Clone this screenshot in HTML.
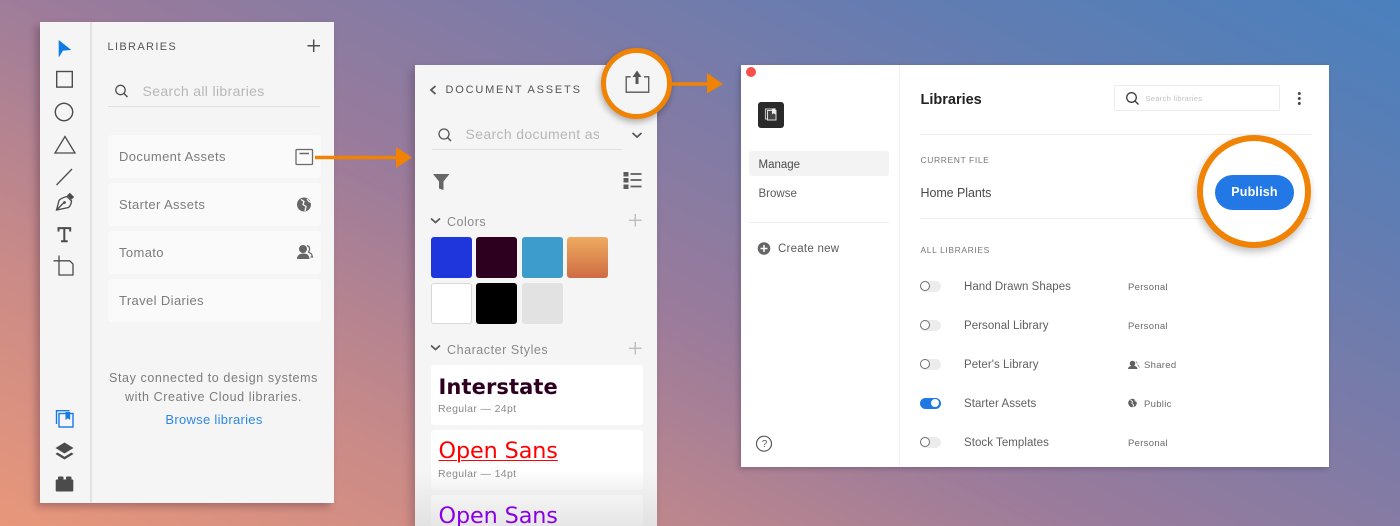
<!DOCTYPE html>
<html><head><meta charset="utf-8"><style>
html,body{margin:0;padding:0;width:1400px;height:526px;overflow:hidden;background:#9a7b9b}
body{position:relative;font-family:"Liberation Sans",sans-serif}
#bg{position:absolute;left:0;top:0;width:1400px;height:526px;background:linear-gradient(27deg,#e8977a 0%,#c98a88 22%,#9a7b9b 45%,#7a7ba8 65%,#5f7db3 82%,#4a80bd 100%)}
.a{position:absolute;white-space:nowrap}
.p{position:absolute;background:#f5f5f5}
.row{position:absolute;left:108px;width:213px;height:43px;background:#fafafa;border-radius:4px}
.row span{position:absolute;left:11px;top:14px;font-size:13px;letter-spacing:.38px;color:#7c7c7c;line-height:16px}
.sw{position:absolute;width:41px;height:41px;border-radius:3px;box-sizing:border-box}
.card{position:absolute;left:431px;width:212px;height:60px;background:#fff;border-radius:3px}
.tog{position:absolute;left:920px;width:21px;height:11px;border-radius:6px;background:#ececec}
.tog i{position:absolute;left:0;top:0;width:8.400px;height:8.400px;border:1.300px solid #6e6e6e;border-radius:50%;background:#fff}
.ln{position:absolute;left:964px;font-size:11.500px;letter-spacing:.05px;color:#5f5f5f;line-height:14px}
.ty{position:absolute;left:1128px;font-size:9.500px;letter-spacing:.3px;color:#6a6a6a;line-height:12px}
svg{position:absolute;overflow:visible}
</style></head><body>
<div id="bg"></div>

<!-- Left panel -->
<div class="p" style="left:40px;top:22px;width:294px;height:481px;box-shadow:-4px 4px 7px rgba(60,30,50,.3)"></div>
<div class="a" style="left:90px;top:22px;width:2px;height:481px;background:#e3e3e3"></div>
<svg style="left:0;top:0" width="340" height="510" fill="none" stroke="#4b4b4b" stroke-width="1.400">
<path d="M58.700 40L71.300 50 63 50.600 58.700 57.500z" fill="#0f7ce6" stroke="none"/>
<rect x="56.700" y="71.500" width="15.600" height="15.600"/>
<circle cx="64" cy="112" r="8.700"/>
<path d="M65 136.500L55 153h20z" stroke-width="1.300"/>
<path d="M56.500 185L72 169" stroke-width="1.300"/>
<path d="M56.500 210L59 200.500Q61 198 67 196.500L71.500 201Q71 205.500 68.500 207.500zM56.500 210L63.500 203" stroke-width="1.300"/>
<path d="M67 195.500l2.800-2.800 4.300 4.300-2.800 2.800z" fill="#4b4b4b" stroke="none"/>
<circle cx="64.500" cy="202.500" r="1.400" fill="#4b4b4b" stroke="none"/>
<path d="M58.500 231.500v-3.400h11.700v3.400M64.300 228v13M61 241.200h6.700" stroke-width="2"/>
<path d="M53.500 260.800H59M59 255.500V275h14V264l-3.300-3.200H59" stroke-width="1.300"/>
<path d="M56.500 424V410.700H69.500" stroke="#1679e8" stroke-width="1.400"/>
<rect x="59" y="413.500" width="14" height="13.500" stroke="#1679e8" stroke-width="1.400"/>
<path d="M65.500 412h4.700v8l-2.300-1.800L65.500 420z" fill="#1679e8" stroke="none"/>
<path d="M64.500 442.500l9 5.500-9 5.500-9-5.500z" fill="#4b4b4b" stroke="none"/>
<path d="M57.500 452.500l7 4.200 7-4.200 2 1.500-9 5.500-9-5.500z" fill="#4b4b4b" stroke="none"/>
<rect x="55.700" y="479.500" width="17.600" height="12" rx="1" fill="#4b4b4b" stroke="none"/>
<rect x="58" y="476.500" width="5.500" height="6" rx="1" fill="#4b4b4b" stroke="none"/>
<rect x="66" y="476.500" width="5.500" height="6" rx="1" fill="#4b4b4b" stroke="none"/>
<path d="M307.500 45.800h12.500M313.700 39.500v12.500" stroke="#4f4f4f" stroke-width="1.500"/>
<circle cx="120.500" cy="90" r="4.700" stroke="#4f4f4f" stroke-width="1.300"/><path d="M124 93.500l3.500 3.500" stroke="#4f4f4f" stroke-width="1.500"/>
</svg>
<div class="a" style="left:107.500px;top:40px;font-size:11px;letter-spacing:1.350px;color:#555;line-height:14px">LIBRARIES</div>
<div class="a" style="left:142.500px;top:83px;font-size:14px;letter-spacing:.35px;color:#b7b7b7;line-height:17px">Search all libraries</div>
<div class="a" style="left:108px;top:106px;width:212px;height:1px;background:#e0e0e0"></div>
<div class="row" style="top:135px"><span>Document Assets</span></div>
<div class="row" style="top:183px"><span>Starter Assets</span></div>
<div class="row" style="top:231px"><span>Tomato</span></div>
<div class="row" style="top:279px"><span>Travel Diaries</span></div>
<svg style="left:0;top:0" width="340" height="300" fill="none">
<rect x="296" y="149.500" width="16.500" height="15" rx="1" stroke="#6a6a6a" stroke-width="1.300"/><path d="M299.500 153.500h9.500" stroke="#6a6a6a" stroke-width="1.500"/>
<circle cx="304" cy="204.500" r="7" fill="#666"/><path d="M301 199.500l3 2-1 3 3 2-1 4.500M307 199l2 2.500 2.500 1" stroke="#fafafa" stroke-width="1.300"/>
<circle cx="303" cy="249" r="4" fill="#666"/><path d="M297 259q0-5 6-5.500t6.500 5.500z" fill="#666"/><path d="M307 245.500q3 1 2.500 4.500l-1 2 3 2 1 3h-2" stroke="#666" stroke-width="1.200"/>
</svg>
<div class="a" style="left:40px;width:347px;text-align:center;top:369px;font-size:12.500px;letter-spacing:.6px;color:#7c7c7c;line-height:19px">Stay connected to design systems<br>with Creative Cloud libraries.</div>
<div class="a" style="left:40px;width:348px;text-align:center;top:412px;font-size:13px;letter-spacing:.3px;color:#2f87e4;line-height:16px">Browse libraries</div>

<!-- Middle panel -->
<div class="p" style="left:415px;top:65px;width:242px;height:461px;background:linear-gradient(#f5f5f5 88%,#e2e2e2 100%);box-shadow:-4px 4px 8px rgba(60,30,50,.25)"></div>
<div class="a" style="left:445.500px;top:83px;font-size:11px;letter-spacing:1.800px;color:#555;line-height:14px">DOCUMENT ASSETS</div>
<div class="a" style="left:465.500px;top:126px;width:133px;overflow:hidden;font-size:14px;letter-spacing:.35px;color:#b7b7b7;line-height:17px">Search document assets</div>
<div class="a" style="left:432px;top:148.500px;width:190px;height:1px;background:#e2e2e2"></div>
<div class="a" style="left:447px;top:215px;font-size:12.500px;letter-spacing:.5px;color:#8a8a8a;line-height:15px">Colors</div>
<div class="a" style="left:447px;top:343px;font-size:12.500px;letter-spacing:.55px;color:#8a8a8a;line-height:15px">Character Styles</div>
<svg style="left:0;top:0" width="700" height="360" fill="none">
<path d="M435.500 86l-4.500 4 4.500 4" stroke="#555" stroke-width="1.800"/>
<circle cx="444" cy="134" r="5" stroke="#555" stroke-width="1.300"/><path d="M447.500 137.500l3.500 3.500" stroke="#555" stroke-width="1.500"/>
<path d="M632.500 133l4.500 4 4.500-4" stroke="#4f4f4f" stroke-width="1.600"/>
<path d="M433 174h16.500l-6 7.500v8.500l-4.500-1.500v-7z" fill="#666"/>
<rect x="623.500" y="172" width="5" height="4.500" fill="#5b5b5b"/><rect x="623.500" y="178" width="5" height="4.500" fill="#5b5b5b"/><rect x="623.500" y="184.500" width="5" height="4.500" fill="#5b5b5b"/>
<path d="M630.500 174h11M630.500 180h11M630.500 186.500h11" stroke="#5b5b5b" stroke-width="1.700"/>
<path d="M431 218.500l4.500 4 4.500-4M431 345.500l4.500 4 4.500-4" stroke="#555" stroke-width="1.600"/>
<path d="M635.300 214v12.500M629 220.300h12.500M635.300 342v12.500M629 348.300h12.500" stroke="#bdbdbd" stroke-width="1.400"/>
</svg>
<div class="sw" style="left:430.500px;top:237px;background:#1f36dd"></div>
<div class="sw" style="left:476px;top:237px;background:#2e001f"></div>
<div class="sw" style="left:521.500px;top:237px;background:#3d9ccb"></div>
<div class="sw" style="left:566.500px;top:237px;background:linear-gradient(#eeab60,#cf6c44)"></div>
<div class="sw" style="left:430.500px;top:283px;background:#fff;border:1px solid #d8d8d8"></div>
<div class="sw" style="left:476px;top:283px;background:#000"></div>
<div class="sw" style="left:521.500px;top:283px;background:#e2e2e2"></div>

<div class="card" style="top:365px"></div>
<div class="card" style="top:430px;background:linear-gradient(#fff 65%,#f2f2f2)"></div>
<div class="card" style="top:495px;height:31px;background:linear-gradient(#f4f4f4,#e6e6e6)"></div>
<div class="a" style="left:438.500px;top:373px;font-family:'DejaVu Sans',sans-serif;font-weight:700;font-size:21px;letter-spacing:.1px;color:#2e001f;line-height:28px">Interstate</div>
<div class="a" style="left:438px;top:403px;font-size:10.500px;letter-spacing:.35px;color:#8a8a8a;line-height:13px">Regular — 24pt</div>
<div class="a" style="left:438.500px;top:437px;font-family:'DejaVu Sans',sans-serif;font-size:22.300px;letter-spacing:-.1px;color:#f00;line-height:28px;text-decoration:underline;text-decoration-thickness:1px;text-underline-offset:2px">Open Sans</div>
<div class="a" style="left:438px;top:468px;font-size:10.500px;letter-spacing:.35px;color:#8a8a8a;line-height:13px">Regular — 14pt</div>
<div class="a" style="left:438.500px;top:502px;font-family:'DejaVu Sans',sans-serif;font-size:22.300px;letter-spacing:-.1px;color:#8a00e6;line-height:28px">Open Sans</div>

<!-- Right window -->
<div class="a" style="left:741px;top:65px;width:588px;height:402px;background:#fff;box-shadow:-2px 2px 5px rgba(40,30,60,.25)"></div>
<div class="a" style="left:899px;top:65px;width:1px;height:402px;background:#f1f1f1"></div>
<div class="a" style="left:745.500px;top:67px;width:10px;height:10px;border-radius:50%;background:#f9504a"></div>
<div class="a" style="left:758px;top:102px;width:26px;height:26px;border-radius:3px;background:#2a2a2a"></div>
<svg style="left:758px;top:102px" width="26" height="26" fill="none"><rect x="7.500" y="7" width="9.500" height="10" stroke="#bbb" stroke-width="1.200"/><rect x="9.500" y="8.500" width="8.500" height="9.500" fill="#444" stroke="#ddd" stroke-width="1"/><path d="M14 6.500h3.500v6l-1.700-1.300L14 12.500z" fill="#eee"/></svg>
<div class="a" style="left:749px;top:151px;width:140px;height:25px;background:#f3f3f3;border-radius:3px"></div>
<div class="a" style="left:758.500px;top:158px;font-size:11.500px;letter-spacing:0;color:#4a4a4a;line-height:14px">Manage</div>
<div class="a" style="left:758.500px;top:187px;font-size:11.500px;letter-spacing:0;color:#5a5a5a;line-height:14px">Browse</div>
<div class="a" style="left:749px;top:221.500px;width:140px;height:1px;background:#efefef"></div>
<div class="a" style="left:778px;top:242px;font-size:11.500px;letter-spacing:.25px;color:#5a5a5a;line-height:14px">Create new</div>
<svg style="left:0;top:0" width="1400" height="526" fill="none">
<circle cx="764" cy="248.500" r="6.300" fill="#666"/><path d="M760.500 248.500h7M764 245v7" stroke="#fff" stroke-width="1.500"/>
<circle cx="764" cy="443.700" r="7.500" stroke="#5a5a5a" stroke-width="1.200"/>
<circle cx="1131.500" cy="97.500" r="4.800" stroke="#3f3f3f" stroke-width="1.300"/><path d="M1135 101l3.500 3.500" stroke="#3f3f3f" stroke-width="1.400"/>
<circle cx="1299.300" cy="93.500" r="1.500" fill="#4a4a4a"/><circle cx="1299.300" cy="98.500" r="1.500" fill="#4a4a4a"/><circle cx="1299.300" cy="103.500" r="1.500" fill="#4a4a4a"/>
<g fill="#606060">
<circle cx="1132.500" cy="363.500" r="2.800"/><path d="M1128 369q0-3 4.500-3.300t5 3.300z"/><path d="M1135.500 361q2 .8 1.800 3l1.700 1.800.8 3z"/>
<circle cx="1132.500" cy="403" r="4.300"/>
</g>
<path d="M1130.500 400l2 1.500-.7 2 1.800 1.300-.6 2.200M1134.500 399.500l1 1.500 1.700.7" stroke="#fff" stroke-width=".8"/>
</svg>
<div class="a" style="left:920.500px;top:91px;font-size:14.500px;font-weight:700;color:#222;line-height:18px">Libraries</div>
<div class="a" style="left:1114px;top:85px;width:164px;height:24px;border:1px solid #ececec;border-radius:2px"></div>
<div class="a" style="left:1145.500px;top:93px;font-size:7.500px;letter-spacing:.3px;color:#c2c2c2;line-height:11px">Search libraries</div>
<div class="a" style="left:920px;top:134px;width:392px;height:1px;background:#eee"></div>
<div class="a" style="left:920.500px;top:154.500px;font-size:8.500px;letter-spacing:.6px;color:#777;line-height:11px">CURRENT FILE</div>
<div class="a" style="left:920.500px;top:185px;font-size:12.500px;letter-spacing:-.07px;color:#4a4a4a;line-height:16px">Home Plants</div>
<div class="a" style="left:920px;top:217.500px;width:392px;height:1px;background:#eee"></div>
<div class="a" style="left:920.500px;top:244.500px;font-size:8.500px;letter-spacing:.6px;color:#777;line-height:11px">ALL LIBRARIES</div>

<div class="tog" style="top:281px"><i></i></div><div class="ln" style="top:280px">Hand Drawn Shapes</div><div class="ty" style="top:281.500px">Personal</div>
<div class="tog" style="top:320px"><i></i></div><div class="ln" style="top:319px">Personal Library</div><div class="ty" style="top:320.500px">Personal</div>
<div class="tog" style="top:359px"><i></i></div><div class="ln" style="top:358px">Peter's Library</div><div class="ty" style="left:1144px;top:359.500px">Shared</div>
<div class="tog" style="top:398px;background:#1f78e6"><i style="left:10px;border-color:#1f78e6;background:#fff"></i></div><div class="ln" style="top:397px">Starter Assets</div><div class="ty" style="left:1144px;top:398.500px">Public</div>
<div class="tog" style="top:437px"><i></i></div><div class="ln" style="top:436px">Stock Templates</div><div class="ty" style="top:437.500px">Personal</div>
<div class="a" style="left:757px;top:436.500px;width:15px;text-align:center;font-size:10px;color:#5a5a5a;line-height:15px">?</div>

<!-- Highlights -->
<div class="a" style="left:1197px;top:135px;width:114px;height:113px;box-sizing:border-box;border:6px solid #f08204;border-radius:50%;background:#fff;box-shadow:-1px 4px 8px rgba(0,0,0,.25)"></div>
<div class="a" style="left:1215px;top:175px;width:79px;height:35px;border-radius:18px;background:#2279e6;color:#fff;font-weight:700;font-size:12.500px;letter-spacing:.2px;line-height:35px;text-align:center">Publish</div>

<div class="a" style="left:601px;top:48px;width:71px;height:71px;box-sizing:border-box;border:5px solid #f08204;border-radius:50%;background:#f5f5f5;box-shadow:-1px 3px 7px rgba(0,0,0,.3)"></div>
<svg style="left:0;top:0" width="1400" height="526" fill="none">
<path d="M630.800 76.800h-4.600v15.400h22.500V76.800H644" stroke="#555" stroke-width="1.300"/>
<path d="M637 84V76" stroke="#555" stroke-width="3"/><path d="M632.500 77l4.500-6.500 4.500 6.500z" fill="#555"/>
<path d="M672 84h35" stroke="#f08204" stroke-width="3.500"/><path d="M707 73v20.500L723 84z" fill="#f08204"/>
<path d="M315 157.500h82" stroke="#f08204" stroke-width="3.500"/><path d="M396 147v21l16-10.500z" fill="#f08204"/>
</svg>
</body></html>
